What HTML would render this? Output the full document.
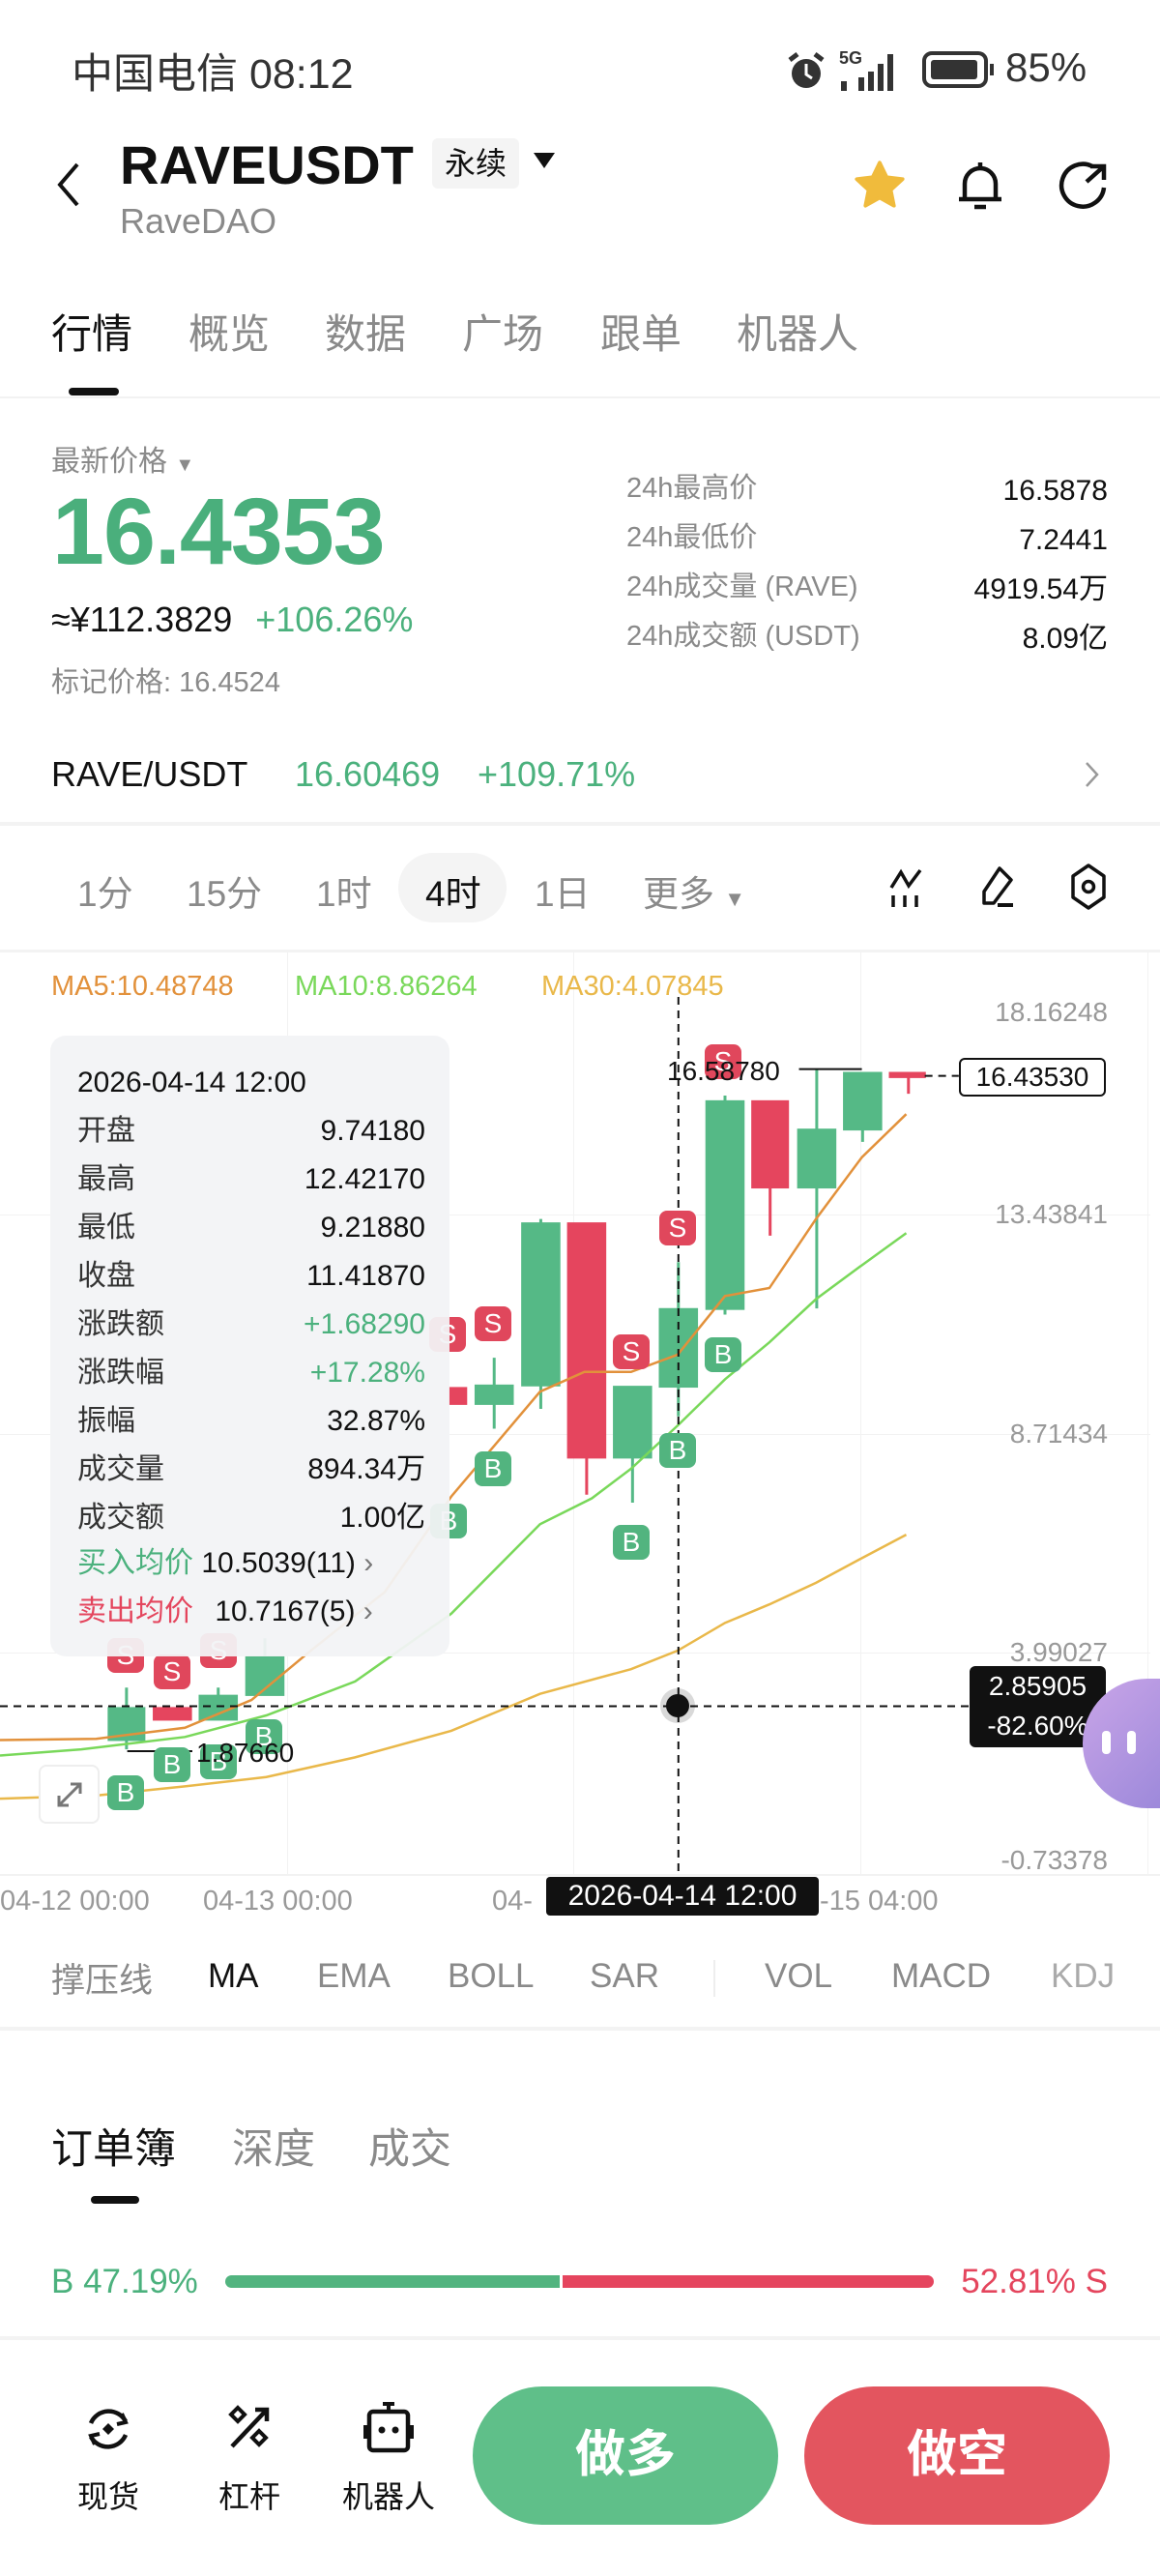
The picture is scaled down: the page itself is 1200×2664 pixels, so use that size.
<!DOCTYPE html>
<html><head><meta charset="utf-8">
<style>
*{margin:0;padding:0;box-sizing:border-box}
body{width:1200px;height:2664px;background:#fff;position:relative;overflow:hidden;font-family:"Liberation Sans","Noto Sans CJK SC",sans-serif;color:#111}
.a{position:absolute;white-space:nowrap}
.g{color:#4bb17d}.r{color:#e4455d}.gr{color:#8a8a8a}
.mk{position:absolute;width:38px;height:36px;border-radius:8px;color:#fff;font-size:28px;line-height:36px;text-align:center;transform:translate(-50%,-50%)}
.mk.s{background:#e0475c}.mk.b{background:#52b47f}
.tt{position:absolute;left:80px;font-size:30px;line-height:40px;color:#333}
.tv{position:absolute;right:760px;font-size:30px;line-height:40px;color:#111;text-align:right}
.yl{position:absolute;right:54px;font-size:28px;color:#999;transform:translateY(-50%)}
</style></head><body>
<!-- status bar -->
<div class="a" style="left:74px;top:42px;font-size:43px;color:#333">中国电信 08:12</div>
<svg class="a" style="left:812px;top:52px" width="44" height="44" viewBox="0 0 44 44"><circle cx="22" cy="24" r="15" fill="#333"/><path d="M5 10l8-6M39 10l-8-6" stroke="#333" stroke-width="5"/><path d="M22 14v11l6 4" stroke="#fff" stroke-width="3" fill="none"/></svg>
<div class="a" style="left:868px;top:50px;font-size:18px;font-weight:bold;color:#333">5G</div>
<svg class="a" style="left:866px;top:52px" width="70" height="42" viewBox="0 0 70 42"><g fill="#333"><rect x="4" y="32" width="6" height="10"/><rect x="22" y="28" width="6" height="14"/><rect x="32" y="22" width="6" height="20"/><rect x="42" y="14" width="6" height="28"/><rect x="52" y="4" width="6" height="38"/></g></svg>
<svg class="a" style="left:954px;top:52px" width="80" height="40" viewBox="0 0 80 40"><rect x="2" y="3" width="64" height="34" rx="8" fill="none" stroke="#333" stroke-width="4"/><rect x="9" y="10" width="48" height="20" rx="3" fill="#333"/><rect x="70" y="14" width="4" height="12" fill="#333"/></svg>
<div class="a" style="left:1040px;top:46px;font-size:42px;color:#333">85%</div>

<!-- header -->
<svg class="a" style="left:54px;top:166px" width="34" height="50" viewBox="0 0 34 50"><path d="M26 4L8 25l18 21" stroke="#111" stroke-width="4" fill="none"/></svg>
<div class="a" style="left:124px;top:138px;font-size:56px;font-weight:bold">RAVEUSDT</div>
<div class="a" style="left:447px;top:143px;width:90px;height:52px;background:#f4f4f4;border-radius:6px;font-size:32px;line-height:52px;text-align:center">永续</div>
<div class="a" style="left:552px;top:158px;width:0;height:0;border-left:11px solid transparent;border-right:11px solid transparent;border-top:16px solid #111"></div>
<div class="a gr" style="left:124px;top:208px;font-size:36px">RaveDAO</div>
<svg class="a" style="left:880px;top:162px" width="60" height="60" viewBox="0 0 24 24"><path d="M12 2.5l2.9 6 6.6.8-4.9 4.5 1.3 6.5L12 17l-5.9 3.3 1.3-6.5-4.9-4.5 6.6-.8z" fill="#f0bb3c" stroke="#f0bb3c" stroke-linejoin="round" stroke-width="1.5"/></svg>
<svg class="a" style="left:988px;top:164px" width="52" height="56" viewBox="0 0 52 56"><path d="M26 4v5M10 42V26a16 16 0 0132 0v16M4 42h44M20 50h12" stroke="#111" stroke-width="4.5" fill="none"/></svg>
<svg class="a" style="left:1094px;top:164px" width="56" height="56" viewBox="0 0 56 56"><path d="M36 8A22 22 0 1048 30" stroke="#111" stroke-width="4.5" fill="none"/><path d="M30 24L48 8M34 8h14v14" stroke="#111" stroke-width="4.5" fill="none"/></svg>

<!-- tabs -->
<div class="a" style="left:53px;top:312px;font-size:42px;color:#111">行情</div>
<div class="a gr" style="left:195px;top:312px;font-size:42px">概览</div>
<div class="a gr" style="left:336px;top:312px;font-size:42px">数据</div>
<div class="a gr" style="left:478px;top:312px;font-size:42px">广场</div>
<div class="a gr" style="left:621px;top:312px;font-size:42px">跟单</div>
<div class="a gr" style="left:762px;top:312px;font-size:42px">机器人</div>
<div class="a" style="left:71px;top:401px;width:52px;height:8px;border-radius:4px;background:#111"></div>
<div class="a" style="left:0;top:410px;width:1200px;height:2px;background:#f2f2f2"></div>

<!-- price -->
<div class="a gr" style="left:53px;top:452px;font-size:30px">最新价格 <span style="font-size:20px">▼</span></div>
<div class="a g" style="left:54px;top:494px;font-size:97px;font-weight:bold;letter-spacing:-1px;color:#4aaf7c">16.4353</div>
<div class="a" style="left:53px;top:620px;font-size:36px">≈¥112.3829 <span class="g" style="margin-left:14px">+106.26%</span></div>
<div class="a gr" style="left:53px;top:682px;font-size:29px">标记价格: 16.4524</div>
<div class="a gr" style="left:648px;top:480px;font-size:29px;line-height:51px">24h最高价<br>24h最低价<br>24h成交量 (RAVE)<br>24h成交额 (USDT)</div>
<div class="a" style="right:54px;top:482px;font-size:30px;line-height:51px;text-align:right">16.5878<br>7.2441<br>4919.54万<br>8.09亿</div>

<div class="a" style="left:53px;top:780px;font-size:36px">RAVE/USDT</div>
<div class="a g" style="left:305px;top:780px;font-size:36px">16.60469</div>
<div class="a g" style="left:494px;top:780px;font-size:36px">+109.71%</div>
<svg class="a" style="left:1120px;top:786px" width="20" height="30" viewBox="0 0 20 30"><path d="M4 3l11 12L4 27" stroke="#999" stroke-width="2.5" fill="none"/></svg>
<div class="a" style="left:0;top:850px;width:1200px;height:4px;background:#f3f3f3"></div>

<!-- interval row -->
<div class="a" style="left:412px;top:882px;width:112px;height:72px;border-radius:36px;background:#f4f4f4"></div>
<div class="a gr" style="left:80px;top:894px;font-size:37px">1分</div>
<div class="a gr" style="left:193px;top:894px;font-size:37px">15分</div>
<div class="a gr" style="left:327px;top:894px;font-size:37px">1时</div>
<div class="a" style="left:440px;top:894px;font-size:37px;color:#111">4时</div>
<div class="a gr" style="left:553px;top:894px;font-size:37px">1日</div>
<div class="a gr" style="left:665px;top:894px;font-size:37px">更多 <span style="font-size:22px">▼</span></div>
<svg class="a" style="left:918px;top:896px" width="44" height="44" viewBox="0 0 44 44"><path d="M4 22L14 6l8 14 12-16" stroke="#111" stroke-width="3.5" fill="none"/><path d="M6 30v12M18 30v12M30 30v12" stroke="#111" stroke-width="3.5"/></svg>
<svg class="a" style="left:1012px;top:894px" width="40" height="46" viewBox="0 0 40 46"><path d="M22 4l12 12-18 24H6V28z" stroke="#111" stroke-width="3.5" fill="none" stroke-linejoin="round"/><path d="M20 42h16" stroke="#111" stroke-width="4"/></svg>
<svg class="a" style="left:1106px;top:892px" width="40" height="50" viewBox="0 0 40 50"><path d="M20 3l16 11v22L20 47 4 36V14z" stroke="#111" stroke-width="3.5" fill="none" stroke-linejoin="round"/><circle cx="20" cy="25" r="5.5" stroke="#111" stroke-width="3.5" fill="none"/></svg>
<div class="a" style="left:0;top:982px;width:1200px;height:3px;background:#f3f3f3"></div>

<!-- chart grid -->
<div class="a" style="left:297px;top:985px;width:1px;height:955px;background:#f2f2f2"></div>
<div class="a" style="left:593px;top:985px;width:1px;height:955px;background:#f2f2f2"></div>
<div class="a" style="left:890px;top:985px;width:1px;height:955px;background:#f2f2f2"></div>
<div class="a" style="left:1187px;top:985px;width:1px;height:955px;background:#f2f2f2"></div>
<div class="a" style="left:0;top:1256px;width:1190px;height:1px;background:#f2f2f2"></div>
<div class="a" style="left:0;top:1483px;width:1190px;height:1px;background:#f2f2f2"></div>
<div class="a" style="left:0;top:1709px;width:1190px;height:1px;background:#f2f2f2"></div>
<div class="a" style="left:0;top:1938px;width:1200px;height:2px;background:#f2f2f2"></div>

<svg class="a" style="left:0;top:980px" width="1200" height="1000" viewBox="0 0 1568 1568" preserveAspectRatio="none">
<g fill="#55b986" stroke="#55b986" stroke-width="3" vector-effect="non-scaling-stroke">
<path d="M731 440V748M855 712V900M917 510V760M980 240V595M1104 197V585M1166 203V315M668 665V780M171 1200V1300M295 1200V1252M358 1120V1212" vector-effect="non-scaling-stroke"/>
<rect x="706" y="447" width="50" height="263"/><rect x="830" y="712" width="50" height="115"/><rect x="892" y="586" width="50" height="126"/><rect x="955" y="249" width="50" height="337"/><rect x="1079" y="295" width="50" height="94"/><rect x="1141" y="203" width="50" height="92"/><rect x="643" y="710" width="50" height="30"/><rect x="147" y="1233" width="48" height="52"/><rect x="270" y="1213" width="50" height="39"/><rect x="333" y="1150" width="50" height="62"/>
</g>
<g fill="#e5455e" stroke="#e5455e" stroke-width="3">
<path d="M793 447V887M1041 249V467M1228 203V237" vector-effect="non-scaling-stroke"/>
<rect x="768" y="447" width="50" height="380"/><rect x="1017" y="249" width="48" height="140"/><rect x="1203" y="203" width="47" height="7"/><rect x="608" y="714" width="22" height="26"/><rect x="208" y="1233" width="50" height="19"/>
</g>
<g fill="none" stroke-width="2.5" vector-effect="non-scaling-stroke">
<polyline vector-effect="non-scaling-stroke" stroke="#e2913b" points="0,1285 130,1283 250,1265 340,1220 420,1140 520,1045 610,890 730,720 790,688 853,688 916,660 980,565 1040,552 1103,440 1165,340 1225,270"/>
<polyline vector-effect="non-scaling-stroke" stroke="#79d85a" points="0,1310 110,1300 250,1280 360,1245 480,1190 610,1080 730,935 800,893 853,845 916,775 980,700 1040,640 1103,570 1165,515 1225,463"/>
<polyline vector-effect="non-scaling-stroke" stroke="#e9b84a" points="0,1380 130,1375 250,1360 360,1345 480,1313 610,1270 730,1210 853,1170 916,1140 980,1095 1040,1065 1103,1030 1165,990 1225,952"/>
<path vector-effect="non-scaling-stroke" stroke="#111" stroke-width="2" stroke-dasharray="8 6" d="M917 80V1505M0 1230H1310M1250 208H1296"/>
<path vector-effect="non-scaling-stroke" stroke="#111" stroke-width="2" d="M1080 197H1165M172 1303H260"/>
</g>
</svg>

<!-- MA legend -->
<div class="a" style="left:53px;top:1004px;font-size:29px;color:#e2913b">MA5:10.48748</div>
<div class="a" style="left:305px;top:1004px;font-size:29px;color:#79d85a">MA10:8.86264</div>
<div class="a" style="left:560px;top:1004px;font-size:29px;color:#e9b84a">MA30:4.07845</div>

<!-- y labels -->
<div class="yl" style="top:1047px">18.16248</div>
<div class="yl" style="top:1256px">13.43841</div>
<div class="yl" style="top:1483px">8.71434</div>
<div class="yl" style="top:1709px">3.99027</div>
<div class="yl" style="top:1924px">-0.73378</div>

<!-- markers -->
<div class="mk s" style="left:748px;top:1098px">S</div>
<div class="mk s" style="left:701px;top:1270px">S</div>
<div class="mk s" style="left:653px;top:1398px">S</div>
<div class="mk s" style="left:510px;top:1369px">S</div>
<div class="mk s" style="left:463px;top:1380px">S</div>
<div class="mk s" style="left:130px;top:1712px">S</div>
<div class="mk s" style="left:178px;top:1729px">S</div>
<div class="mk s" style="left:226px;top:1707px">S</div>
<div class="mk b" style="left:748px;top:1401px">B</div>
<div class="mk b" style="left:701px;top:1500px">B</div>
<div class="mk b" style="left:653px;top:1595px">B</div>
<div class="mk b" style="left:510px;top:1519px">B</div>
<div class="mk b" style="left:464px;top:1573px">B</div>
<div class="mk b" style="left:130px;top:1854px">B</div>
<div class="mk b" style="left:178px;top:1825px">B</div>
<div class="mk b" style="left:226px;top:1822px">B</div>
<div class="mk b" style="left:273px;top:1796px">B</div>

<!-- price labels in chart -->
<div class="a" style="left:690px;top:1092px;font-size:28px">16.58780</div>
<div class="a" style="left:992px;top:1094px;width:152px;height:40px;border:2px solid #111;border-radius:6px;background:#fff;font-size:28px;line-height:36px;text-align:center">16.43530</div>
<div class="a" style="left:203px;top:1797px;font-size:28px">1.87660</div>
<div class="a" style="left:1003px;top:1723px;width:141px;height:84px;background:#111;border-radius:6px;color:#fff;font-size:28px;line-height:41px;text-align:center">2.85905<br>-82.60%</div>
<div class="a" style="left:1120px;top:1736px;width:150px;height:134px;border-radius:67px;background:linear-gradient(135deg,#c9a5e8,#8f80d6)"></div>
<div class="a" style="left:1140px;top:1790px;width:9px;height:24px;border-radius:4px;background:#fff"></div>
<div class="a" style="left:1166px;top:1790px;width:9px;height:24px;border-radius:4px;background:#fff"></div>
<div class="a" style="left:689px;top:1752px;width:24px;height:24px;border-radius:12px;background:#111;box-shadow:0 0 0 6px rgba(0,0,0,0.15)"></div>
<div class="a" style="left:40px;top:1825px;width:63px;height:61px;border:2px solid #eee;border-radius:8px;background:#fff"></div>
<svg class="a" style="left:55px;top:1839px" width="34" height="34" viewBox="0 0 34 34"><path d="M6 28L28 6M18 6h10v10M6 18v10h10" stroke="#777" stroke-width="3" fill="none"/></svg>

<!-- tooltip -->
<div class="a" style="left:52px;top:1071px;width:413px;height:642px;border-radius:16px;background:rgba(242,243,245,0.94)"></div>
<div class="tt" style="top:1100px;color:#111">2026-04-14 12:00</div>
<div class="tt" style="top:1150px">开盘</div><div class="tv" style="top:1150px">9.74180</div>
<div class="tt" style="top:1200px">最高</div><div class="tv" style="top:1200px">12.42170</div>
<div class="tt" style="top:1250px">最低</div><div class="tv" style="top:1250px">9.21880</div>
<div class="tt" style="top:1300px">收盘</div><div class="tv" style="top:1300px">11.41870</div>
<div class="tt" style="top:1350px">涨跌额</div><div class="tv" style="top:1350px;color:#4bb17d">+1.68290</div>
<div class="tt" style="top:1400px">涨跌幅</div><div class="tv" style="top:1400px;color:#4bb17d">+17.28%</div>
<div class="tt" style="top:1450px">振幅</div><div class="tv" style="top:1450px">32.87%</div>
<div class="tt" style="top:1500px">成交量</div><div class="tv" style="top:1500px">894.34万</div>
<div class="tt" style="top:1550px">成交额</div><div class="tv" style="top:1550px">1.00亿</div>
<div class="tt" style="top:1597px;color:#4bb17d">买入均价 <span style="color:#111">10.5039(11) </span><span style="color:#777">›</span></div>
<div class="tt" style="top:1647px;color:#e4455d">卖出均价 <span style="color:#111;margin-left:14px">10.7167(5) </span><span style="color:#777">›</span></div>

<!-- x labels -->
<div class="a" style="left:0;top:1950px;font-size:29px;color:#999">04-12 00:00</div>
<div class="a" style="left:210px;top:1950px;font-size:29px;color:#999">04-13 00:00</div>
<div class="a" style="left:509px;top:1950px;font-size:29px;color:#999">04-</div>
<div class="a" style="left:848px;top:1950px;font-size:29px;color:#999">-15 04:00</div>
<div class="a" style="left:565px;top:1941px;width:282px;height:40px;background:#111;border-radius:4px;color:#fff;font-size:30px;line-height:40px;text-align:center">2026-04-14 12:00</div>

<!-- indicators -->
<div class="a gr" style="left:53px;top:2020px;font-size:35px">撑压线</div>
<div class="a" style="left:215px;top:2024px;font-size:35px">MA</div>
<div class="a gr" style="left:328px;top:2024px;font-size:35px">EMA</div>
<div class="a gr" style="left:463px;top:2024px;font-size:35px">BOLL</div>
<div class="a gr" style="left:610px;top:2024px;font-size:35px">SAR</div>
<div class="a" style="left:738px;top:2027px;width:2px;height:38px;background:#eee"></div>
<div class="a gr" style="left:791px;top:2024px;font-size:35px">VOL</div>
<div class="a gr" style="left:922px;top:2024px;font-size:35px">MACD</div>
<div class="a gr" style="left:1087px;top:2024px;font-size:35px;color:#aaa">KDJ</div>
<div class="a" style="left:0;top:2096px;width:1200px;height:4px;background:#f3f3f3"></div>

<!-- order book -->
<div class="a" style="left:53px;top:2188px;font-size:43px;color:#111">订单簿</div>
<div class="a gr" style="left:240px;top:2188px;font-size:43px">深度</div>
<div class="a gr" style="left:381px;top:2188px;font-size:43px">成交</div>
<div class="a" style="left:94px;top:2271px;width:50px;height:8px;border-radius:4px;background:#111"></div>
<div class="a g" style="left:53px;top:2340px;font-size:35px">B 47.19%</div>
<div class="a" style="left:233px;top:2353px;width:346px;height:13px;border-radius:7px 0 0 7px;background:#52b47f"></div>
<div class="a" style="left:582px;top:2353px;width:384px;height:13px;border-radius:0 7px 7px 0;background:#e5455e"></div>
<div class="a r" style="right:54px;top:2340px;font-size:35px">52.81% S</div>
<div class="a" style="left:0;top:2416px;width:1200px;height:4px;background:#f3f3f3"></div>

<!-- bottom bar -->
<svg class="a" style="left:84px;top:2484px" width="56" height="56" viewBox="0 0 56 56"><path d="M10 22A20 20 0 0146 20M46 34A20 20 0 0110 36" stroke="#111" stroke-width="4.5" fill="none"/><path d="M42 12l4 9-9 2M14 44l-4-9 9-2" stroke="#111" stroke-width="4" fill="none"/><path d="M28 22l6 6-6 6-6-6z" fill="#111"/></svg>
<svg class="a" style="left:230px;top:2482px" width="56" height="56" viewBox="0 0 56 56"><path d="M10 48L46 10M34 10h12v12" stroke="#111" stroke-width="4.5" fill="none"/><path d="M16 8l7 7-7 7-7-7zM38 32l7 7-7 7-7-7z" stroke="#111" stroke-width="4" fill="none"/></svg>
<svg class="a" style="left:374px;top:2480px" width="56" height="60" viewBox="0 0 56 60"><rect x="8" y="14" width="40" height="40" rx="4" stroke="#111" stroke-width="4.5" fill="none"/><path d="M22 6h12M28 6v8M4 28v14M52 28v14" stroke="#111" stroke-width="4"/><circle cx="21" cy="33" r="3.5" fill="#111"/><circle cx="35" cy="33" r="3.5" fill="#111"/></svg>
<div class="a" style="left:80px;top:2557px;font-size:32px">现货</div>
<div class="a" style="left:226px;top:2557px;font-size:32px">杠杆</div>
<div class="a" style="left:354px;top:2557px;font-size:32px">机器人</div>
<div class="a" style="left:489px;top:2468px;width:316px;height:143px;border-radius:72px;background:#5fbf89;color:#fff;font-size:52px;font-weight:bold;line-height:143px;text-align:center">做多</div>
<div class="a" style="left:832px;top:2468px;width:316px;height:143px;border-radius:72px;background:#e3555f;color:#fff;font-size:52px;font-weight:bold;line-height:143px;text-align:center">做空</div>
</body></html>
